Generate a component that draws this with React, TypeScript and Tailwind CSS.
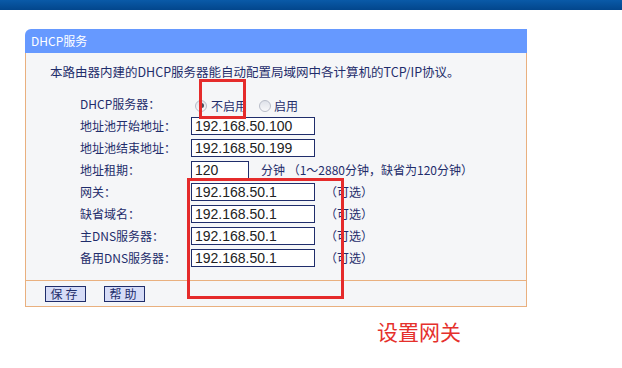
const rows = [
  { label: "地址池开始地址：", value: "192.168.50.100" },
  { label: "地址池结束地址：", value: "192.168.50.199" },
];

const optRows = [
  { label: "网关：", value: "192.168.50.1" },
  { label: "缺省域名：", value: "192.168.50.1" },
  { label: "主DNS服务器：", value: "192.168.50.1" },
  { label: "备用DNS服务器：", value: "192.168.50.1" },
];

const Field = ({ value, w = "w-[124px]" }: { value: string; w?: string }) => (
  <div
    className={`${w} h-[18px] border border-[#1f2d6b] bg-white pl-[3px] text-[14px] leading-[16px] text-[#222] font-['Liberation_Sans',sans-serif]`}
  >
    {value}
  </div>
);

const Radio = ({ checked }: { checked?: boolean }) => (
  <span className="flex h-[12px] w-[12px] items-center justify-center rounded-full border border-[#b8bcc8] bg-gradient-to-b from-[#dfe2ea] to-[#f8f8fa]">
    {checked && <span className="h-[5px] w-[5px] rounded-full bg-[#4a4e5a]" />}
  </span>
);

export default function App() {
  return (
    <div className="relative h-[368px] w-[622px] overflow-hidden bg-white font-['Noto_Sans_CJK_SC',sans-serif] text-[12px] text-[#1f2d6b]">
      <div className="h-[10px] bg-gradient-to-b from-[#0a5aa8] to-[#03468c]" />

      <div className="ml-[25px] mt-[19px] w-[502px]">
        <div className="flex h-[24px] items-center rounded-tl-[6px] bg-[#6699ff] pl-[6px] text-[12px] text-white">
          DHCP服务
        </div>

        <div className="border-x border-b border-[#e9b07f] bg-[#f5f6f8]">
          <div className="pl-[24px] pt-[10px] h-[28px] leading-[18px] text-[12.5px]">
            本路由器内建的DHCP服务器能自动配置局域网中各计算机的TCP/IP协议。
          </div>

          <div className="mt-[12px] pl-[54px]">
            <div className="flex h-[22px] items-center">
              <span className="w-[111px]">DHCP服务器：</span>
              <span className="ml-[4px] flex items-center gap-[4px] pt-[3px]">
                <Radio checked />
                <span>不启用</span>
              </span>
              <span className="ml-[12px] flex items-center gap-[3px] pt-[3px]">
                <Radio />
                <span>启用</span>
              </span>
            </div>

            {rows.map((r) => (
              <div key={r.label} className="flex h-[22px] items-center">
                <span className="w-[111px]">{r.label}</span>
                <Field value={r.value} />
              </div>
            ))}

            <div className="flex h-[22px] items-center">
              <span className="w-[111px]">地址租期：</span>
              <Field value="120" w="w-[58px]" />
              <span className="ml-[12px]">分钟 （1～2880分钟，缺省为120分钟）</span>
            </div>

            {optRows.map((r) => (
              <div key={r.label} className="flex h-[22px] items-center">
                <span className="w-[111px]">{r.label}</span>
                <Field value={r.value} />
                <span className="ml-[10px]">（可选）</span>
              </div>
            ))}
          </div>

          <div className="mt-[11px] flex h-[26px] gap-[18px] border-t border-[#e9b07f] pl-[19px] pt-[5px]">
            <button className="h-[16px] w-[41px] border border-[#1f2d6b] bg-[#d6dcf7] text-[12px] leading-[14px] tracking-[3px] text-[#1f2d6b]">
              保存
            </button>
            <button className="h-[16px] w-[41px] border border-[#1f2d6b] bg-[#d6dcf7] text-[12px] leading-[14px] tracking-[3px] text-[#1f2d6b]">
              帮助
            </button>
          </div>
        </div>
      </div>

      <div className="mt-[10px] pl-[377px] text-[21px] leading-[28px] text-[#e5302c]">设置网关</div>

      <div className="absolute left-[199px] top-[79px] h-[40px] w-[47px] border-[3px] border-[#e52b2b]" />
      <div className="absolute left-[187px] top-[178px] h-[121px] w-[157px] border-[3px] border-[#e52b2b]" />
    </div>
  );
}
